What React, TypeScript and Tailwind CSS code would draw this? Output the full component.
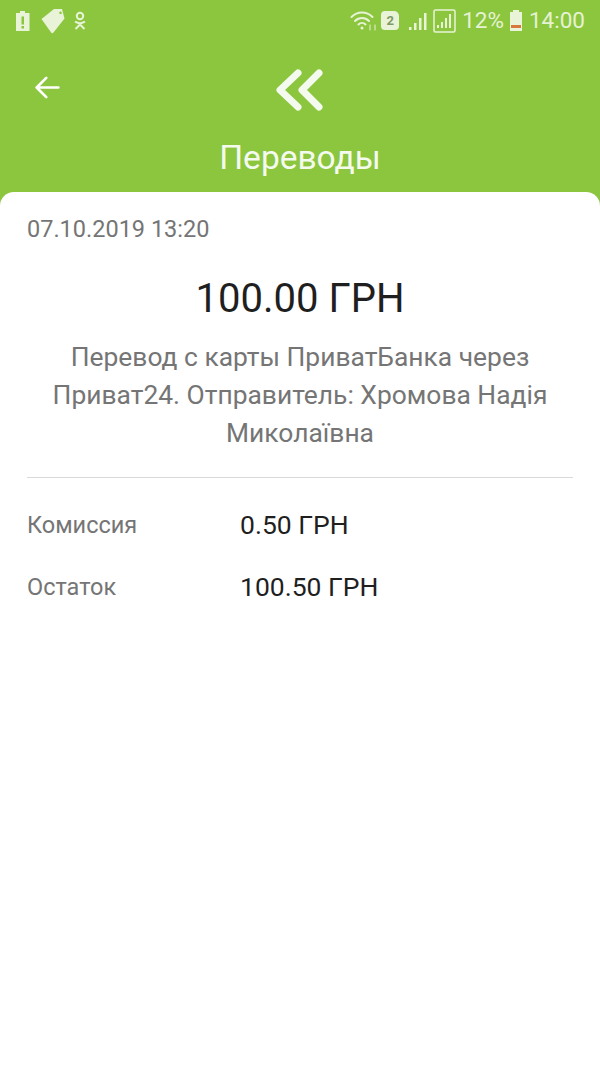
const StatusLeft = () => (
  <div className="flex items-center">
    {/* battery alert */}
    <svg width="16" height="22" viewBox="0 0 16 22" className="ml-[15px]">
      <path fillRule="evenodd" fill="#e8f3d8" d="M1 3h4V1h5v2h4.500v18H1zM6.500 6.500v8h2.500v-8zM6.500 16v2.500h2.500V16z" />
    </svg>
    {/* tag */}
    <svg width="26" height="26" viewBox="0 0 26 26" className="ml-[9px]">
      <path fillRule="evenodd" fill="#e8f3d8" d="M1.500 11 14 1h8l2.500 9.500-11 14a1.500 1.500 0 0 1-2.200.2zM20.500 3.500a1.300 1.300 0 1 0 .1 0z" />
    </svg>
    {/* ok.ru */}
    <svg width="14" height="20" viewBox="0 0 14 20" fill="none" stroke="#e8f3d8" strokeWidth="2" className="ml-[7px]">
      <circle cx="7" cy="5" r="3.200" />
      <path d="M2 10.500c3 2 7 2 10 0M7 12v2M7 13.500l-4.500 4.500M7 13.500l4.500 4.500" />
    </svg>
  </div>
);

const StatusRight = () => (
  <div className="flex items-center text-[#e6f2d4] font-['Roboto',sans-serif] text-[22.5px] leading-none">
    {/* wifi */}
    <svg width="28" height="24" viewBox="0 0 28 24" fill="none" stroke="#e8f3d8" strokeLinecap="round" className="mr-[3px]">
      <path strokeWidth="2" d="M1.500 8c6-6 15-6 21 0M5 12c4-4 10-4 14 0M8.500 15.500c2-2 5-2 7 0" />
      <circle cx="12" cy="19" r="1.500" fill="#e8f3d8" stroke="none" />
      <path strokeWidth="1" d="M20 16v5M25 16v5" />
    </svg>
    {/* sim 2 */}
    <div className="mr-[9px] flex h-[19px] w-[18px] items-center justify-center rounded-sm rounded-tr-[5px] bg-[#e8f3d8] font-['Roboto',sans-serif] text-[13px] font-bold text-[#7f9a62]">
      2
    </div>
    {/* signal 1 */}
    <svg width="22" height="22" viewBox="0 0 22 22" fill="#e8f3d8" className="mr-[3px]">
      <rect x="1" y="17" width="2.500" height="3" />
      <rect x="6" y="13" width="2.500" height="7" />
      <rect x="11" y="8" width="2.500" height="12" />
      <rect x="16" y="3" width="2.500" height="17" />
    </svg>
    {/* signal 2 in a box */}
    <svg width="23" height="24" viewBox="0 0 23 24" className="mr-[6px]">
      <rect x="1" y="1" width="21" height="22" rx="1.500" fill="none" stroke="#e8f3d8" strokeWidth="1.500" />
      <g fill="#e8f3d8">
        <rect x="4" y="16" width="2" height="3" />
        <rect x="8" y="13" width="2" height="6" />
        <rect x="12" y="9" width="2" height="10" />
        <rect x="16" y="5" width="2" height="14" />
      </g>
    </svg>
    <span>12%</span>
    {/* battery */}
    <svg width="14" height="21" viewBox="0 0 14 21" className="ml-[5px] mr-[6px]">
      <path fill="#e8f3d8" d="M4 0h6v2h3v19H1V2h3z" />
      <rect x="2" y="15" width="10" height="3" fill="#d9773a" />
    </svg>
    <span className="mr-[15px]">14:00</span>
  </div>
);

export default function App() {
  return (
    <div className="flex h-[1065px] w-[600px] flex-col overflow-hidden bg-[#8cc63f] font-['Roboto',sans-serif]">
      <div className="flex h-[40px] items-center justify-between pt-[1px]">
        <StatusLeft />
        <StatusRight />
      </div>

      <div className="relative flex h-[152px] flex-col items-center">
        <svg width="24" height="24" viewBox="0 0 24 24" fill="none" stroke="#fff" strokeWidth="2.200" className="absolute left-[33px] top-[33px] h-[29px] w-[29px]" strokeLinecap="round" strokeLinejoin="round">
          <path d="M21 12H3M11 4l-8 8 8 8" />
        </svg>
        <svg width="50" height="42" viewBox="0 0 50 42" fill="none" stroke="#f5faef" strokeWidth="7" strokeLinecap="round" strokeLinejoin="round" className="mt-[29px]">
          <path d="M23 4 5 21l18 17M44 4 27 21l17 17" />
        </svg>
        <div className="mt-[28px] text-[33.5px] leading-[38px] text-[#f5faef]">Переводы</div>
      </div>

      <main className="flex-1 rounded-t-[14px] bg-white px-[27px]">
        <div className="pt-[23px] text-[23.5px] leading-[28px] text-[#757575]">07.10.2019 13:20</div>
        <div className="mt-[31px] text-center text-[40px] leading-[50px] text-[#1f1f1f]">100.00 ГРН</div>
        <p className="mt-[14px] text-center text-[26.4px] leading-[38px] text-[#757575]">
          Перевод с карты ПриватБанка через Приват24. Отправитель: Хромова Надія Миколаївна
        </p>
        <div className="mt-[25px] h-px bg-[#d9d9d9]" />
        <div className="mt-[30px] flex items-center">
          <span className="w-[213px] text-[23.5px] leading-[34px] text-[#757575]">Комиссия</span>
          <span className="text-[26.5px] leading-[34px] text-[#1f1f1f]">0.50 ГРН</span>
        </div>
        <div className="mt-[28px] flex items-center">
          <span className="w-[213px] text-[23.5px] leading-[34px] text-[#757575]">Остаток</span>
          <span className="text-[26.5px] leading-[34px] text-[#1f1f1f]">100.50 ГРН</span>
        </div>
      </main>
    </div>
  );
}
